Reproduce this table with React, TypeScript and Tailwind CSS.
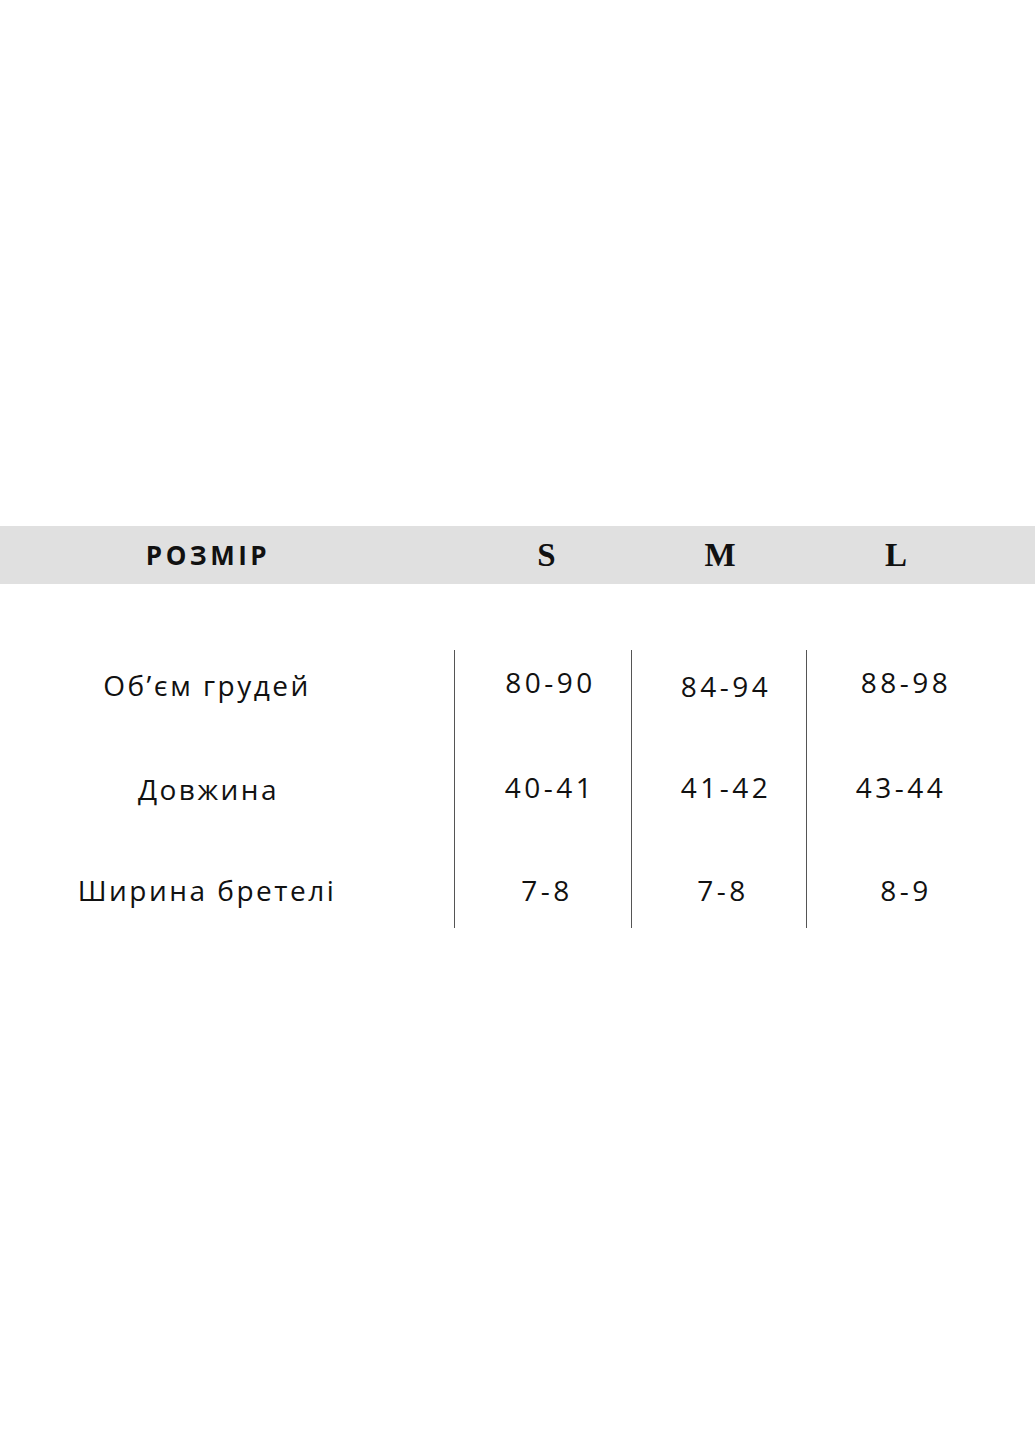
const rows = [
  {
    label: "Об’єм грудей",
    labelCls: "pt-[3px]",
    cells: [
      { v: "80-90", cls: "pl-[15px] pb-[2px]" },
      { v: "84-94", cls: "pl-[14px] pt-[5px]" },
      { v: "88-98", cls: "pl-[24px] pb-[2px]" },
    ],
  },
  {
    label: "Довжина",
    labelCls: "pt-[1px] pl-[3px]",
    cells: [
      { v: "40-41", cls: "pl-[14px] pb-[2px]" },
      { v: "41-42", cls: "pl-[14px] pb-[3px]" },
      { v: "43-44", cls: "pl-[14px] pb-[2px]" },
    ],
  },
  {
    label: "Ширина бретелі",
    labelCls: "pb-[7px] tracking-[1.9px]",
    cells: [
      { v: "7-8", cls: "pl-[8px] pb-[6px]" },
      { v: "7-8", cls: "pl-[8px] pb-[6px]" },
      { v: "8-9", cls: "pl-[24px] pb-[6px]" },
    ],
  },
];

const sans = "font-['Open_Sans','Liberation_Sans',sans-serif]";

export default function App() {
  return (
    <div className="min-h-[1440px] w-full bg-white pt-[526px] text-[#111]">
      {/* header band */}
      <div className="grid h-[58px] grid-cols-[454px_177px_175px_175px] items-center bg-[#e0e0e0]">
        <div
          className={`pr-[38px] text-center text-[26px] font-bold tracking-[3.5px] ${sans}`}
        >
          РОЗМІР
        </div>
        <div className="pl-[8px] pt-[2px] text-center font-['Liberation_Serif',serif] text-[33px] font-bold">
          S
        </div>
        <div className="pl-[3px] pt-[2px] text-center font-['Liberation_Serif',serif] text-[33px] font-bold">
          M
        </div>
        <div className="pl-[5px] pt-[2px] text-center font-['Liberation_Serif',serif] text-[33px] font-bold">
          L
        </div>
      </div>

      {/* measurements */}
      <div className={`mt-[66px] flex ${sans}`}>
        <div className="flex w-[454px] flex-col gap-[39px] pr-[40px]">
          {rows.map((r) => (
            <div
              key={r.label}
              className={`flex h-[66px] items-center justify-center text-[28px] tracking-[2.5px] ${r.labelCls}`}
            >
              {r.label}
            </div>
          ))}
        </div>
        {[0, 1, 2].map((col) => (
          <div
            key={col}
            className={`flex flex-col gap-[39px] border-l border-[#555] pb-[2px] ${
              col === 0 ? "w-[177px]" : "w-[175px]"
            }`}
          >
            {rows.map((r) => (
              <div
                key={r.label}
                className={`flex h-[66px] items-center justify-center text-[28px] tracking-[3.5px] ${r.cells[col].cls}`}
              >
                {r.cells[col].v}
              </div>
            ))}
          </div>
        ))}
      </div>
    </div>
  );
}
